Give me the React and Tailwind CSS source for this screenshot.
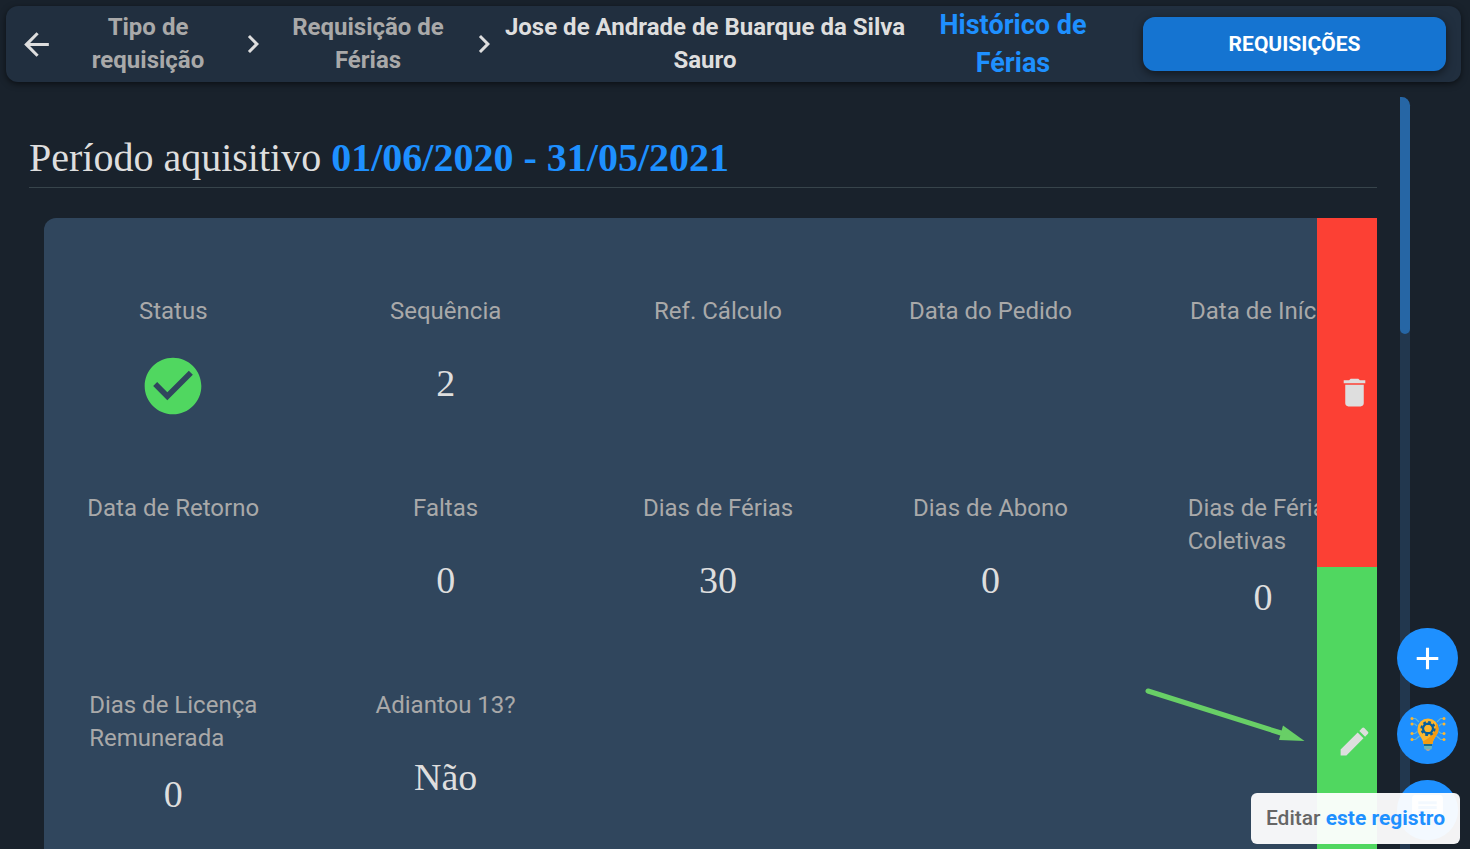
import {
  MdAdd,
  MdArrowBack,
  MdChat,
  MdCheckCircle,
  MdChevronRight,
  MdDelete,
  MdEdit,
} from "react-icons/md";

const fields = [
  { label: "Status", status: true },
  { label: "Sequência", value: "2" },
  { label: "Ref. Cálculo" },
  { label: "Data do Pedido" },
  { label: "Data de Início" },
  { label: "Data de Retorno" },
  { label: "Faltas", value: "0" },
  { label: "Dias de Férias", value: "30" },
  { label: "Dias de Abono", value: "0" },
  { label: "Dias de Férias\nColetivas", value: "0" },
  { label: "Dias de Licença\nRemunerada", value: "0" },
  { label: "Adiantou 13?", value: "Não" },
];

function Header() {
  return (
    <header className="mx-[6px] mr-[9px] mt-[6px] grid h-[76px] shrink-0 grid-cols-[60fr_164fr_46fr_184fr_48fr_394fr_222fr_337fr] items-center rounded-xl bg-[#212f3f] text-center text-2xl font-bold leading-[33px] text-[#a9a9a9] shadow-[0_2px_6px_rgba(0,0,0,0.55)]">
      <button type="button" aria-label="Voltar" className="flex justify-center text-[#dedede]">
        <MdArrowBack className="size-[37px]" />
      </button>
      <a href="#tipo" className="px-4">Tipo de requisição</a>
      <MdChevronRight className="size-9 justify-self-center text-[#dedede]" />
      <a href="#ferias">Requisição de Férias</a>
      <MdChevronRight className="size-9 justify-self-center text-[#dedede]" />
      <span className="-mx-2 text-[#dedede]">Jose de Andrade de Buarque da Silva Sauro</span>
      <h1 className="px-6 text-[27px] leading-[38px] text-[#1e90ff]">Histórico de Férias</h1>
      <button
        type="button"
        className="ml-[19px] mr-[15px] h-[54px] rounded-xl bg-[#1574d1] text-[21px] font-bold text-white shadow-[0_3px_10px_rgba(0,0,0,0.5)]"
      >
        REQUISIÇÕES
      </button>
    </header>
  );
}

function Field({ label, value, status }) {
  return (
    <div className="flex h-[197px] flex-col items-center">
      <dt className="min-h-[49px] whitespace-pre text-2xl leading-[33px] text-[#a9a9a9]">{label}</dt>
      <dd className="flex h-[78px] items-center font-['Liberation_Serif',serif] text-[38px] text-[#dedede]">
        {status ? (
          <MdCheckCircle role="img" aria-label="Aprovado" className="mt-[6px] size-[68px] text-[#50d760]" />
        ) : (
          value
        )}
      </dd>
    </div>
  );
}

function IdeaIcon() {
  return (
    <svg viewBox="0 0 36 36" className="size-9" aria-hidden="true">
      <g fill="none" stroke="#62b6d3" strokeWidth="1.2">
        <path d="M3 2.500h2.500l3.500 3.500M3 8h2l2 2M3 17.500h2l2.500-2M3 23.500h2.500l4-3.500" />
        <path d="M33 2.500h-2.500L27 6M33 8h-2l-2 2M33 17.500h-2l-2.500-2M33 23.500h-2.500l-4-3.500" />
      </g>
      <g fill="#fdb62f">
        <circle cx="2" cy="2.500" r="1.500" />
        <circle cx="2" cy="8" r="1.500" />
        <circle cx="2" cy="17.500" r="1.500" />
        <circle cx="2" cy="23.500" r="1.500" />
        <circle cx="34" cy="2.500" r="1.500" />
        <circle cx="34" cy="8" r="1.500" />
        <circle cx="34" cy="17.500" r="1.500" />
        <circle cx="34" cy="23.500" r="1.500" />
      </g>
      <path d="M18 2.500a10.500 10.500 0 0 0-10.500 10.500c0 6 5 8 6 15h9c1-7 6-9 6-15A10.500 10.500 0 0 0 18 2.500z" fill="#fdb62f" />
      <path d="M26.200 6.500c0 9-5 15-13.200 18.700l.5 2.800h9c1-7 6-9 6-15 0-2.500-.9-4.700-2.300-6.500z" fill="#f39b13" />
      <circle cx="18" cy="12.500" r="4.800" fill="none" stroke="#075f9d" strokeWidth="2.600" />
      <circle cx="18" cy="12.500" r="6.600" fill="none" stroke="#075f9d" strokeWidth="2" strokeDasharray="2.8 2.384" />
      <circle cx="18" cy="12.500" r="3.600" fill="#fdb62f" />
      <path d="M14 28h8v2.500h-8z" fill="#176e93" />
      <path d="M14 30h8v1.800c0 1.100-1 2-2 2h-4c-1 0-2-.9-2-2z" fill="#68b3bb" />
      <path d="M15.800 33h4.400l-1 2h-2.400z" fill="#a3a3a3" />
    </svg>
  );
}

const fab =
  "flex h-[60px] w-[61px] items-center justify-center rounded-full bg-[#1e90ff] text-white";

export default function App() {
  return (
    <div className="relative flex h-screen flex-col overflow-hidden bg-[#19222c] font-['Roboto',sans-serif]">
      <Header />

      <div className="mt-[15px] flex min-h-0 flex-1 pl-[29px] pr-[60px]">
        <main className="mr-[23px] min-w-0 flex-1 overflow-hidden">
          <h2 className="flex h-[91px] items-end border-b border-[#37444b] pb-[6px] font-['Liberation_Serif',serif] text-[40px] leading-[46px] text-[#dedede]">
            <span>
              Período aquisitivo <strong className="font-bold text-[#1e90ff]">01/06/2020 - 31/05/2021</strong>
            </span>
          </h2>

          <section aria-label="Requisição" className="ml-[15px] mt-[30px] flex h-[698px] overflow-hidden rounded-l-xl bg-[#30465d]">
            <div className="min-w-0 flex-1 overflow-hidden pt-[77px]">
              <dl className="-ml-[7px] grid w-[107%] grid-cols-5">
                {fields.map((field) => (
                  <Field key={field.label} {...field} />
                ))}
              </dl>
            </div>
            <div className="flex w-[60px] shrink-0 flex-col text-[#dedede]">
              <button type="button" aria-label="Excluir" className="flex flex-1 items-center justify-end bg-[#fc4034] pr-1">
                <MdDelete className="size-[37px]" />
              </button>
              <button type="button" aria-label="Editar" className="flex flex-1 items-center justify-end bg-[#50d760] pr-1">
                <MdEdit className="size-[37px]" />
              </button>
            </div>
          </section>
        </main>

        <div className="w-[10px] shrink-0 rounded-tr-[10px] bg-[#22374e]">
          <div className="h-[237px] rounded-b-md rounded-tr-[10px] bg-[#2666a5]" />
        </div>
      </div>

      <svg viewBox="0 0 162 58" className="absolute right-[165px] top-[686px] h-[58px] w-[162px]" aria-hidden="true">
        <path d="M5 5L138 47" stroke="#68cf66" strokeWidth="5" strokeLinecap="round" />
        <path d="M140 39.500L161.500 55L136 54z" fill="#68cf66" />
      </svg>

      <nav aria-label="Ações" className="absolute right-3 top-[628px] flex flex-col gap-4">
        <button type="button" aria-label="Adicionar" className={fab}>
          <MdAdd className="size-[37px]" />
        </button>
        <button type="button" aria-label="Ideias" className={fab}>
          <IdeaIcon />
        </button>
        <button type="button" aria-label="Mensagens" className={fab}>
          <MdChat className="size-[37px]" />
        </button>
      </nav>

      <div role="tooltip" className="absolute bottom-[5px] right-[10px] flex h-[51px] items-center whitespace-pre rounded-md bg-white/95 px-[15px] text-[21px] font-medium text-[#666]">
        Editar <strong className="font-bold text-[#1e90ff]">este registro</strong>
      </div>
    </div>
  );
}
